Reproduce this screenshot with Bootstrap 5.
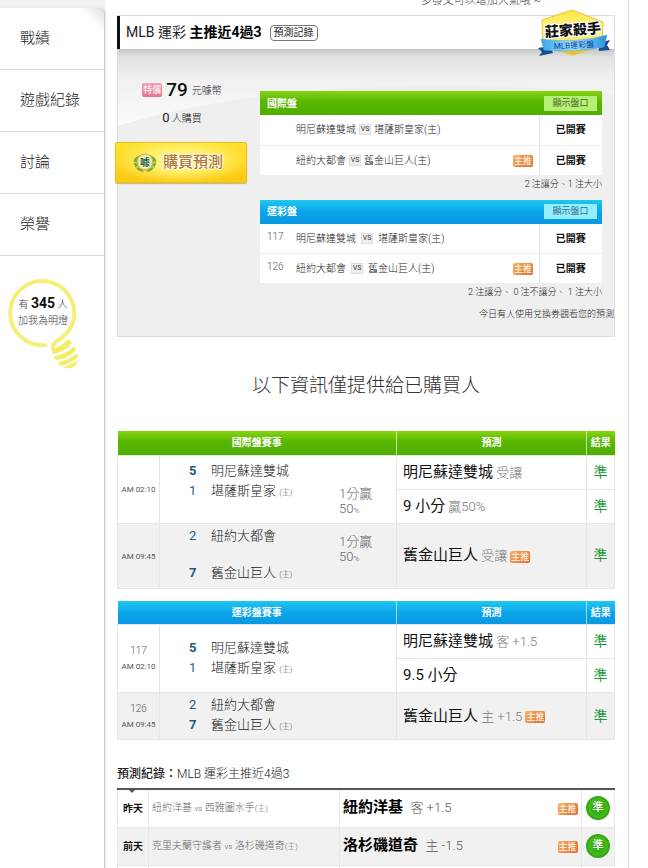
<!DOCTYPE html>
<html lang="zh-Hant">
<head>
<meta charset="utf-8">
<meta name="viewport" content="width=device-width, initial-scale=1">
<title>MLB 運彩 主推近4過3</title>
<link href="https://cdn.jsdelivr.net/npm/bootstrap@5.3.0/dist/css/bootstrap.min.css" rel="stylesheet">
<style>
body{font-family:Roboto,"Noto Sans CJK TC",sans-serif;font-size:10px;line-height:15px;font-weight:300;color:#222;background:#fff}
b,th{font-weight:700}
a{color:inherit;text-decoration:none}
.screen{height:100vh}
.side{width:105px;flex:none;background:#f1f1f1;padding-top:8px}
.side-in{background:linear-gradient(225deg,#ddd 0,#fff 18px);border-right:1px solid #ccc;border-top-right-radius:5px;box-shadow:1px 0 2px #e4e4e4}
.side-link{height:62px;padding-left:20px;font-size:15px;border-bottom:1px solid #ddd;color:#222}
.bulb{width:72px;height:90px;margin:23px 0 0 7px}
.bulb-text{position:absolute;top:16px;left:0;right:0;line-height:16px;color:#333}
.bulb-text b{font-size:14px;color:#111}
.main{border-right:1px solid #dcdcdc;margin-right:19px;padding:0 13px 0 12px;min-width:0}
.tip{height:15px;font-size:11px;color:#444;padding-right:74px}
.tip span{margin-top:-7px}
.panel{border:1px solid #dcdcdc;background:#efefef}
.panel-head{height:33px;background:#fff;border-left:3px solid #111;padding-left:6px;margin-left:-1px;font-size:14px;font-weight:400;color:#222}
.panel-head b{color:#000}
.rec-btn{border:1px solid #777;border-radius:4px;background:#fff;font-size:10px;line-height:14px;padding:0 3px;margin-left:8px;color:#222}
.panel-body{position:relative;background:linear-gradient(#c4c4c4 0,#e2e2e2 8px,#f0f0f0 30px,#fbfbfb 75px,#fdfdfd);padding:42px 12px 14px 0}
.curve{position:absolute;left:0;top:35px;width:100%;height:calc(100% - 35px)}
.buy-col{width:130px;flex:none;margin-left:-3px;margin-right:15px;margin-top:-13px;z-index:1}
.odds-col{z-index:1;min-width:0}
.tag-pink{background:linear-gradient(#f3a1b3,#e8728e);color:#fff;font-weight:400;border-radius:2px;width:20px;height:14px;line-height:14px;font-size:9px;text-align:center}
.price{font-size:19px;font-weight:500;color:#111;line-height:24px}
.count{font-size:13px;font-weight:400}
.buy{width:132px;height:41px;border:1px solid #e4bf25;border-radius:2px;background:radial-gradient(ellipse at 50% 45%,#fff9bb 0,#fff06e 35%,transparent 75%),linear-gradient(#ffe22c,#fbc911);box-shadow:0 1px 1px #c8b870;font-size:15px;font-weight:500;color:#b0762c;text-shadow:1px 0 #fff,-1px 0 #fff,0 1px #fff,0 -1px #fff}
.green{background:linear-gradient(#86d312,#58b702 45%,#50ae00)}
.blue{background:linear-gradient(#1fc8ee,#0ba4ea 50%,#0a98e2)}
.odds-head{height:24px;color:#fff;padding:0 5px 0 7px;font-weight:700}
.odds-btn{border:0;width:53px;height:15px;line-height:15px;font-size:9px;padding:0;color:#476b25;background:#b6ee77}
.blue .odds-btn{background:#93efff;color:#376a86}
.grid-table{width:100%;border-collapse:collapse;table-layout:fixed}
.odds td{height:30px;border-bottom:1px solid #eee;background:#fff;padding:0}
.odds td:last-child{border-left:1px solid #dfe3ef;text-align:center;font-weight:700;color:#111}
.vs{display:inline-block;border:1px solid #ddd;background:#eee;color:#333;font-weight:400;font-size:7px;line-height:9px;height:11px;width:12px;text-align:center;vertical-align:2px;margin:0 3px}
.wide .vs{margin:0 5px}
.odds.wide td:first-child{color:#555;padding:0 0 4px 7px}
.tag{display:inline-block;width:20px;height:12px;line-height:12px;font-size:9px;font-weight:400;background:linear-gradient(135deg,#f6b35d,#e66a2b);color:#fff;border-radius:2px;text-align:center;vertical-align:middle}
.odds .tag{margin-left:4px}
.notes{text-align:right;color:#222;font-size:9px;margin-top:1px}
.notes.wider{margin-top:7px;margin-right:-12px}
.gold-badge{position:absolute;right:3px;top:-7px;width:74px;height:50px;z-index:2}
.only{font-size:19px;line-height:28px;text-align:center;margin:35px 0 31px;color:#333}
.match{margin-bottom:12px}
.match th{height:24px;color:#fff;text-align:center;border-right:1px solid #fff9;padding:0}
.match th:last-child{border-right:0}
.match td{border:1px solid #e6e6e6;padding:0}
.match tbody tr{height:34px}
.match .tall{height:65px}
.match tbody .mid{height:47px}
.alt td{background:#f1f1f1}
.when{text-align:center;font-size:10px;color:#555}
.when small{font-size:8px;white-space:nowrap;font-weight:400}
.match td.game{padding-left:29px;font-size:13px;line-height:20px;color:#222}
.score{width:22px;color:#1d6184;font-weight:400}
.score b{color:#1b5a80}
.host{font-size:8px;color:#555}
.teams{width:150px}
.half{line-height:15px;color:#666;width:40px;margin-top:25px}
.apart{gap:17px}
.apart + .half{margin-top:8px}
.half small{font-size:8px}
.match td.pick{padding-left:6px;font-size:13px;color:#777}
.pick span:first-child{font-size:15px;color:#111;font-weight:400}
td.hit{font-size:14px;color:#1a9a37;text-align:center;font-weight:400}
.log-title{font-size:12px;line-height:18px;margin-top:25px;margin-bottom:5px}
.log-title b{font-weight:500}
.log{border-top:2px solid #555}
.log td{height:38px;border:1px solid #e8e8e8;padding:0 3px;white-space:nowrap}
.log td:first-child{font-weight:700;color:#111;text-align:center}
.log td:nth-child(2){color:#666;font-size:10px}
.log strong{font-size:15px;color:#000;margin-right:5px;font-weight:700}
.log .line{font-size:13px;color:#555}
.log small{font-size:8px}
.ball{display:block;width:24px;height:24px;line-height:20px;border:2px solid #35a51a;border-radius:50%;background:radial-gradient(#2c9b10,#50ce1c);color:#fff;font-size:11px;font-weight:500;text-align:center;margin:auto}
.notch{position:absolute;left:11px;top:1px;border:4px solid transparent;border-top-color:#555;border-bottom:0}
</style>
<script src="https://cdn.jsdelivr.net/npm/bootstrap@5.3.0/dist/js/bootstrap.bundle.min.js"></script>
</head>
<body>
<div class="screen d-flex overflow-hidden">
<aside class="side d-flex flex-column">
 <div class="side-in flex-grow-1">
 <nav>
  <a class="side-link d-flex align-items-center" href="#">戰績</a>
  <a class="side-link d-flex align-items-center" href="#">遊戲紀錄</a>
  <a class="side-link d-flex align-items-center" href="#">討論</a>
  <a class="side-link d-flex align-items-center" href="#">榮譽</a>
 </nav>
 <a class="bulb d-block position-relative" href="#">
  <svg width="72" height="90" viewBox="0 0 72 90" fill="none"><path d="M38 66A32 32 0 1 1 63 50Q58 57 50 62Q45 65 46 70" stroke="#f6ee78" stroke-width="4" stroke-linecap="round"/><path d="M45 70Q54 68 61 60L65 64Q58 73 46 75Z M47 77Q60 75 67 67L69 71Q61 80 49 81Z M51 83Q63 81 70 74L71 78Q64 85 53 87Z M56 88Q65 86 71 81Q70 87 64 89Q60 90 56 88Z" fill="#f6ec62"/></svg>
  <span class="bulb-text text-center">有 <b>345</b> 人<br>加我為明燈</span>
 </a>
 </div>
</aside>
<main class="main flex-grow-1">
 <div class="tip d-flex justify-content-end"><span>多發文可以增加人氣哦 ~</span></div>
 <section class="panel position-relative">
  <div class="panel-head d-flex align-items-center"><span>MLB 運彩 <b>主推近4過3</b></span><button class="rec-btn" type="button">預測記錄</button></div>
  <svg class="gold-badge" viewBox="0 0 74 50"><defs><linearGradient id="g1" x2="0" y2="1"><stop stop-color="#ffe53b"/><stop offset=".5" stop-color="#fff6a0"/><stop offset="1" stop-color="#efbb12"/></linearGradient><linearGradient id="g2"><stop stop-color="#3ba6e8"/><stop offset=".5" stop-color="#9be2fb"/><stop offset="1" stop-color="#2a8fdb"/></linearGradient></defs><path d="M35 1L66 13L65 37L36 46L6 37L5 11Z" fill="url(#g1)" stroke="#e6c53a"/><path d="M1 39L13 37L16 44L2 47L5 43Z M61 34L73 31L70 36L73 41L62 42Z" fill="#174f91"/><path d="M4 30Q38 35 70 26L67 38Q38 44 7 41Z" fill="url(#g2)" stroke="#4caede" stroke-width=".5"/><text x="36" y="26" text-anchor="middle" font-size="14" font-weight="900" fill="#111" stroke="#fff" stroke-width="2" paint-order="stroke" transform="rotate(-4 36 22)">莊家殺手</text><text x="37" y="39" text-anchor="middle" font-size="8" font-weight="400" fill="#123f9b" transform="rotate(-3 37 36)">MLB運彩盤</text></svg>
  <div class="panel-body d-flex">
   <svg class="curve" viewBox="0 0 498 254" preserveAspectRatio="none"><path d="M0 42Q60 24 130 14Q260 -4 420 4L498 10V254H0Z" fill="#efefef"/></svg>
   <div class="buy-col">
    <div class="d-flex align-items-center justify-content-center ps-1"><span class="tag-pink me-1">特價</span><span class="price me-1">79</span><span>元噱幣</span></div>
    <div class="text-center my-2 ps-1"><span class="count">0</span> 人購買</div>
    <button type="button" class="buy d-flex align-items-center justify-content-center gap-1 mt-3 py-0 ps-0 pe-2"><svg width="28" height="22" viewBox="0 0 28 22"><path d="M9 3Q1 6 3 12Q5 19 13 20Q8 14 8 9ZM19 3Q27 6 25 12Q23 19 15 20Q20 14 20 9Z" fill="#6fb22f"/><path d="M3 10L8 12M5 15L10 15M25 10L20 12M23 15L18 15" stroke="#d8ee7a"/><circle cx="14" cy="10" r="8" fill="#f5e48a" stroke="#dca43b"/><text x="14" y="14" text-anchor="middle" font-size="10" font-weight="700" fill="#246333">噱</text></svg>購買預測</button>
   </div>
   <div class="odds-col flex-grow-1">
    <div class="odds-head green d-flex align-items-center justify-content-between">國際盤<button class="odds-btn" type="button">顯示盤口</button></div>
    <table class="grid-table odds"><colgroup><col style="width:36px"><col><col style="width:30px"><col style="width:63px"></colgroup>
     <tr><td></td><td>明尼蘇達雙城<span class="vs">VS</span>堪薩斯皇家(主)</td><td></td><td>已開賽</td></tr>
     <tr><td></td><td>紐約大都會<span class="vs">VS</span>舊金山巨人(主)</td><td><span class="tag">主推</span></td><td>已開賽</td></tr>
    </table>
    <div class="notes">2 注讓分、1 注大小</div>
    <div class="odds-head blue d-flex align-items-center justify-content-between mt-2">運彩盤<button class="odds-btn" type="button">顯示盤口</button></div>
    <table class="grid-table odds wide"><colgroup><col style="width:36px"><col><col style="width:30px"><col style="width:63px"></colgroup>
     <tr><td>117</td><td>明尼蘇達雙城<span class="vs">VS</span>堪薩斯皇家(主)</td><td></td><td>已開賽</td></tr>
     <tr><td>126</td><td>紐約大都會<span class="vs">VS</span>舊金山巨人(主)</td><td><span class="tag">主推</span></td><td>已開賽</td></tr>
    </table>
    <div class="notes">2 注讓分、 0 注不讓分、 1 注大小</div>
    <div class="notes wider">今日有人使用兌換券觀看您的預測</div>
   </div>
  </div>
 </section>
 <h2 class="only fw-light">以下資訊僅提供給已購買人</h2>
 <table class="grid-table match"><colgroup><col style="width:42px"><col><col style="width:190px"><col style="width:28px"></colgroup>
  <thead><tr class="green"><th colspan="2">國際盤賽事</th><th>預測</th><th>結果</th></tr></thead>
  <tbody>
  <tr><td class="when" rowspan="2"><small>AM 02:10</small></td><td class="game" rowspan="2"><div class="d-flex"><div class="teams"><div class="d-flex"><span class="score"><b>5</b></span><span>明尼蘇達雙城</span></div><div class="d-flex"><span class="score">1</span><span>堪薩斯皇家 <span class="host">(主)</span></span></div></div><div class="half">1分贏<br>50<small>%</small></div></div></td><td class="pick"><span>明尼蘇達雙城</span> 受讓</td><td class="hit">準</td></tr>
  <tr><td class="pick"><span>9 小分</span> 贏50%</td><td class="hit">準</td></tr>
  <tr class="alt tall"><td class="when"><small>AM 09:45</small></td><td class="game"><div class="d-flex"><div class="teams d-flex flex-column apart"><div class="d-flex"><span class="score">2</span><span>紐約大都會</span></div><div class="d-flex"><span class="score"><b>7</b></span><span>舊金山巨人 <span class="host">(主)</span></span></div></div><div class="half">1分贏<br>50<small>%</small></div></div></td><td class="pick"><span>舊金山巨人</span> 受讓 <span class="tag">主推</span></td><td class="hit">準</td></tr>
  </tbody>
 </table>
 <table class="grid-table match"><colgroup><col style="width:42px"><col><col style="width:190px"><col style="width:28px"></colgroup>
  <thead><tr class="blue"><th colspan="2">運彩盤賽事</th><th>預測</th><th>結果</th></tr></thead>
  <tbody>
  <tr><td class="when" rowspan="2">117<br><small>AM 02:10</small></td><td class="game" rowspan="2"><div class="d-flex"><span class="score"><b>5</b></span><span>明尼蘇達雙城</span></div><div class="d-flex"><span class="score">1</span><span>堪薩斯皇家 <span class="host">(主)</span></span></div></td><td class="pick"><span>明尼蘇達雙城</span> 客 +1.5</td><td class="hit">準</td></tr>
  <tr><td class="pick"><span>9.5 小分</span></td><td class="hit">準</td></tr>
  <tr class="alt mid"><td class="when">126<br><small>AM 09:45</small></td><td class="game"><div class="d-flex"><span class="score">2</span><span>紐約大都會</span></div><div class="d-flex"><span class="score"><b>7</b></span><span>舊金山巨人 <span class="host">(主)</span></span></div></td><td class="pick"><span>舊金山巨人</span> 主 +1.5 <span class="tag">主推</span></td><td class="hit">準</td></tr>
  </tbody>
 </table>
 <h3 class="log-title fw-light"><b>預測紀錄：</b>MLB 運彩主推近4過3</h3>
 <div class="position-relative"><span class="notch"></span>
 <table class="grid-table log"><colgroup><col style="width:31px"><col><col style="width:215px"><col style="width:27px"><col style="width:33px"></colgroup>
  <tr><td>昨天</td><td>紐約洋基 <small>vs</small> 西雅圖水手<small>(主)</small></td><td class="border-end-0"><strong>紐約洋基</strong> <span class="line">客 +1.5</span></td><td class="border-start-0"><span class="tag">主推</span></td><td><span class="ball">準</span></td></tr>
  <tr class="alt"><td>前天</td><td>克里夫蘭守護者 <small>vs</small> 洛杉磯道奇<small>(主)</small></td><td class="border-end-0"><strong>洛杉磯道奇</strong> <span class="line">主 -1.5</span></td><td class="border-start-0"><span class="tag">主推</span></td><td><span class="ball">準</span></td></tr>
  <tr><td></td><td></td><td class="border-end-0"></td><td class="border-start-0"></td><td></td></tr>
 </table></div>
</main>
</div>
</body>
</html>
